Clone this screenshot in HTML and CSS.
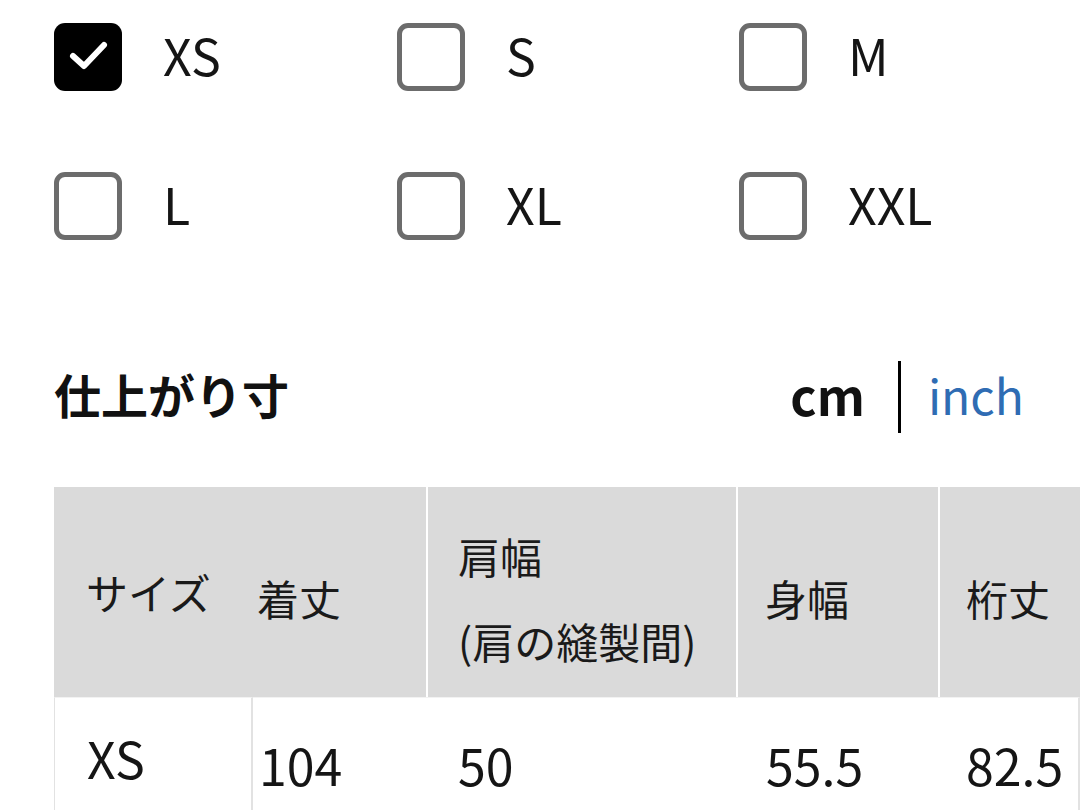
FILE: index.html
```html
<!DOCTYPE html>
<html lang="ja">
<head>
<meta charset="utf-8">
<link rel="stylesheet" href="styles.css">
</head>
<body>
<div class="page">
  <div class="sizes">
    <label class="opt">
      <span class="box checked">
        <svg viewBox="0 0 68 68" width="68" height="68"><path d="M19 33 L30 43 L50 22" fill="none" stroke="#fff" stroke-width="6" stroke-linecap="round" stroke-linejoin="round"/></svg>
      </span>
      <span class="lbl">XS</span>
    </label>
    <label class="opt"><span class="box"></span><span class="lbl">S</span></label>
    <label class="opt"><span class="box"></span><span class="lbl">M</span></label>
    <label class="opt"><span class="box"></span><span class="lbl">L</span></label>
    <label class="opt"><span class="box"></span><span class="lbl">XL</span></label>
    <label class="opt"><span class="box"></span><span class="lbl">XXL</span></label>
  </div>

  <div class="head-row">
    <h2 class="title">仕上がり寸</h2>
    <div class="units">
      <span class="unit-on">cm</span>
      <span class="divider"></span>
      <span class="unit-off">inch</span>
    </div>
  </div>

  <table class="sizetable">
    <colgroup>
      <col class="c1"><col class="c2"><col class="c3"><col class="c4"><col class="c5">
    </colgroup>
    <thead>
      <tr>
        <th class="h-first">サイズ</th>
        <th class="h-plain">着丈</th>
        <th class="h-sep h-two">肩幅<br>(肩の縫製間)</th>
        <th class="h-sep p4">身幅</th>
        <th class="h-sep p5">桁丈</th>
      </tr>
    </thead>
    <tbody>
      <tr>
        <td class="d-first">XS</td>
        <td class="d2">104</td>
        <td class="d3">50</td>
        <td class="d4">55.5</td>
        <td class="d5">82.5</td>
      </tr>
    </tbody>
  </table>
</div>
</body>
</html>
```

FILE: styles.css
```css
html, body {
  margin: 0;
  padding: 0;
  background: #fff;
}
body {
  font-family: "Noto Sans CJK JP", "Noto Sans", sans-serif;
  color: #111;
  width: 1080px;
  height: 810px;
  overflow: hidden;
}
.page {
  padding: 23px 0 0 54px;
}
.sizes {
  display: grid;
  grid-template-columns: 343px 342px 300px;
  grid-auto-rows: 68px;
  row-gap: 81px;
}
.opt {
  display: flex;
  align-items: center;
  gap: 41px;
}
.box {
  width: 68px;
  height: 68px;
  box-sizing: border-box;
  border: 5px solid #6c6c6c;
  border-radius: 11px;
  flex: none;
}
.box.checked {
  border: none;
  background: #000;
}
.box svg { display: block; }
.lbl {
  font-size: 50px;
  line-height: 60px;
  color: #151515;
  margin-bottom: 7px;
}
.head-row {
  display: flex;
  align-items: center;
  justify-content: space-between;
  margin-top: 121px;
  padding-right: 56px;
  height: 72px;
}
.title {
  margin: 0 0 7px 0;
  font-size: 47px;
  font-weight: 700;
  line-height: 60px;
  letter-spacing: 0;
}
.units {
  display: flex;
  align-items: center;
  height: 72px;
}
.unit-on {
  font-size: 50px;
  font-weight: 700;
  line-height: 60px;
  margin-bottom: 6px;
}
.divider {
  width: 3px;
  height: 72px;
  background: #000;
  margin: 0 27px 0 33px;
}
.unit-off {
  font-size: 48px;
  line-height: 60px;
  color: #2f6cb3;
  margin-bottom: 6px;
}
.sizetable {
  margin-top: 54px;
  border-collapse: separate;
  border-spacing: 0;
  table-layout: fixed;
  width: 1026px;
}
.c1 { width: 199px; }
.c2 { width: 173px; }
.c3 { width: 310px; }
.c4 { width: 202px; }
.c5 { width: 142px; }
.sizetable th {
  background: #dadada;
  height: 210px;
  box-sizing: border-box;
  font-weight: 400;
  font-size: 42px;
  line-height: 50px;
  text-align: left;
  vertical-align: middle;
  color: #1a1a1a;
  padding: 12px 0 0 0;
  white-space: nowrap;
}
.sizetable th.h-first { padding: 0 0 0 32px; }
.sizetable th.h-plain { padding-left: 4px; }
.sizetable th.h-sep { border-left: 2px solid #fff; }
.sizetable th.h-two { padding-left: 30px; line-height: 85px; padding-top: 11px; }
.sizetable th.p4 { padding-left: 27px; }
.sizetable th.p5 { padding-left: 26px; }
.sizetable td {
  font-size: 50px;
  line-height: 60px;
  height: 130px;
  vertical-align: top;
  padding-top: 36px;
  color: #151515;
  box-sizing: border-box;
  border-top: 1px solid #f2f2f2;
}
.sizetable td.d-first {
  padding: 29px 0 0 32px;
  border-left: 1px solid #e2e2e2;
  border-right: 2px solid #e2e2e2;
}
.sizetable td.d2 { padding-left: 6px; }
.sizetable td.d3 { padding-left: 32px; }
.sizetable td.d4 { padding-left: 30px; }
.sizetable td.d5 { padding-left: 28px; border-right: 2px solid #e2e2e2; }
```
